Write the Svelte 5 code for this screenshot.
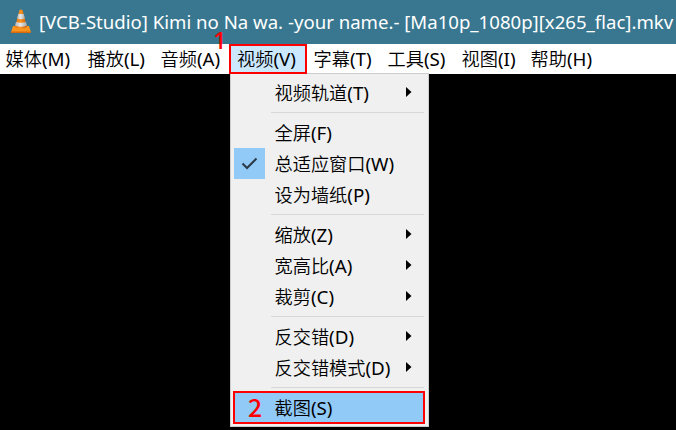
<script>
  const bar = [
    { cn: '媒体', key: 'M', w: 82 },
    { cn: '播放', key: 'L', w: 73 },
    { cn: '音频', key: 'A', w: 77 },
    { cn: '视频', key: 'V', w: 78, open: true },
    { cn: '字幕', key: 'T', w: 74 },
    { cn: '工具', key: 'S', w: 74 },
    { cn: '视图', key: 'I', w: 69 },
    { cn: '帮助', key: 'H', w: 80 }
  ];
  const groups = [
    [{ cn: '视频轨道', key: 'T', sub: true }],
    [
      { cn: '全屏', key: 'F' },
      { cn: '总适应窗口', key: 'W', checked: true },
      { cn: '设为墙纸', key: 'P' }
    ],
    [
      { cn: '缩放', key: 'Z', sub: true },
      { cn: '宽高比', key: 'A', sub: true },
      { cn: '裁剪', key: 'C', sub: true }
    ],
    [
      { cn: '反交错', key: 'D', sub: true },
      { cn: '反交错模式', key: 'D', sub: true }
    ],
    [{ cn: '截图', key: 'S', active: true }]
  ];
</script>

<div class="window">
  <header>
    <svg class="cone" width="22" height="25" viewBox="0 0 22 25">
      <defs>
        <linearGradient id="o" x1="0" x2="1"><stop offset="0" stop-color="#e07010" /><stop offset=".45" stop-color="#fb9320" /><stop offset="1" stop-color="#c95c05" /></linearGradient>
        <linearGradient id="w" x1="0" x2="1"><stop offset="0" stop-color="#b5b5b5" /><stop offset=".45" stop-color="#e9e9e9" /><stop offset="1" stop-color="#a5a5a5" /></linearGradient>
      </defs>
      <path d="M3 17H19L21 23.5H1Z" fill="#f9951f" />
      <path d="M1 22.5H21V24H1Z" fill="#d96a0a" />
      <path d="M9.5 1Q11 0 12.5 1L17 18Q11 21 5 18Z" fill="url(#o)" />
      <path d="M8.3 5H13.7L15 9.5Q11 11 7 9.5Z" fill="url(#w)" />
      <path d="M6 13Q11 14.5 16 13L17 16.5Q11 19 5 16.5Z" fill="url(#w)" />
    </svg>
    <span class="title">[VCB-Studio] Kimi no Na wa. -your name.- [Ma10p_1080p][x265_flac].mkv</span>
  </header>
  <nav>
    {#each bar as b}
      <div class="entry" class:open={b.open} style:width="{b.w}px">{b.cn}<span class="key">({b.key})</span></div>
    {/each}
  </nav>
  <main></main>

  <div class="menu">
    {#each groups as group, i}
      {#if i}<div class="sep"></div>{/if}
      {#each group as item}
        <div class="item" class:active={item.active}>
          <span class="gutter" class:checked={item.checked}>
            {#if item.checked}
              <svg width="17" height="14" viewBox="0 0 17 14"><path d="M1.5 6.5L6 11L15.5 1.5" fill="none" stroke="#2b3b48" stroke-width="2" /></svg>
            {/if}
          </span>
          <span class="label">{item.cn}<span class="key">({item.key})</span></span>
          {#if item.sub}<svg class="arrow" width="6" height="10" viewBox="0 0 6 10"><path d="M0 0L5.5 5L0 10Z" /></svg>{/if}
        </div>
      {/each}
    {/each}
  </div>
  <div class="mark one">1</div>
  <div class="mark two">2</div>
</div>

<style>
  :global(body) { background: #000; overflow: hidden; }
  .window {
    position: relative; width: 676px; height: 430px; display: flex; flex-direction: column;
    overflow: hidden; background: #000; color: #000;
    font: 18.2px 'Noto Sans CJK SC', sans-serif; font-weight: 350; white-space: nowrap;
  }
  header { height: 44px; flex: none; display: flex; align-items: center; padding-left: 10px; background: #38778f; color: #fff; box-sizing: border-box; }
  .cone { flex: none; margin-top: -2px; }
  .title { font: 18.6px/42px 'Noto Sans', sans-serif; margin: -1px 0 0 7px; }
  nav { height: 30px; flex: none; display: flex; background: #fff; }
  .entry { box-sizing: border-box; flex: none; padding-left: 5.5px; line-height: 29px; }
  .open { background: #cce8ff; box-shadow: inset 0 0 0 2px #f00; margin-left: -3px; padding-left: 8px; position: relative; z-index: 2; }
  .entry:nth-child(n + 5) { padding-left: 6.5px; }
  .key { font-family: 'Noto Sans', sans-serif; font-size: 18.8px; font-weight: 400; line-height: 1; }
  main { flex: 1; background: #000; }
  .menu { position: absolute; left: 230px; top: 73px; width: 199px; height: 354px; box-sizing: border-box; border: 1px solid #ccc; padding: 3px; background: #f0f0f0; }
  .item { height: 31px; display: flex; align-items: center; }
  .gutter { width: 31px; height: 31px; display: flex; align-items: center; justify-content: center; }
  .checked { background: #91c9f7; }
  .label { flex: 1; margin-left: 9.5px; line-height: 31px; }
  .arrow { margin: -2px 13px 0 0; }
  .sep { height: 1px; margin: 4px 1px 4px 37px; background: #d7d7d7; }
  .active { height: 33px; box-sizing: border-box; background: #91c9f7; margin: -1px 0 0 -1px; padding-left: 1px; box-shadow: inset 0 0 0 2px #f00; }
  .mark { position: absolute; color: #f00; z-index: 3; }
  .one { left: 213px; top: 28px; font: 500 24px/24px 'Noto Sans', sans-serif; }
  .two { left: 248px; top: 394px; font: 500 25px/24px 'Noto Sans CJK SC', sans-serif; }
</style>
